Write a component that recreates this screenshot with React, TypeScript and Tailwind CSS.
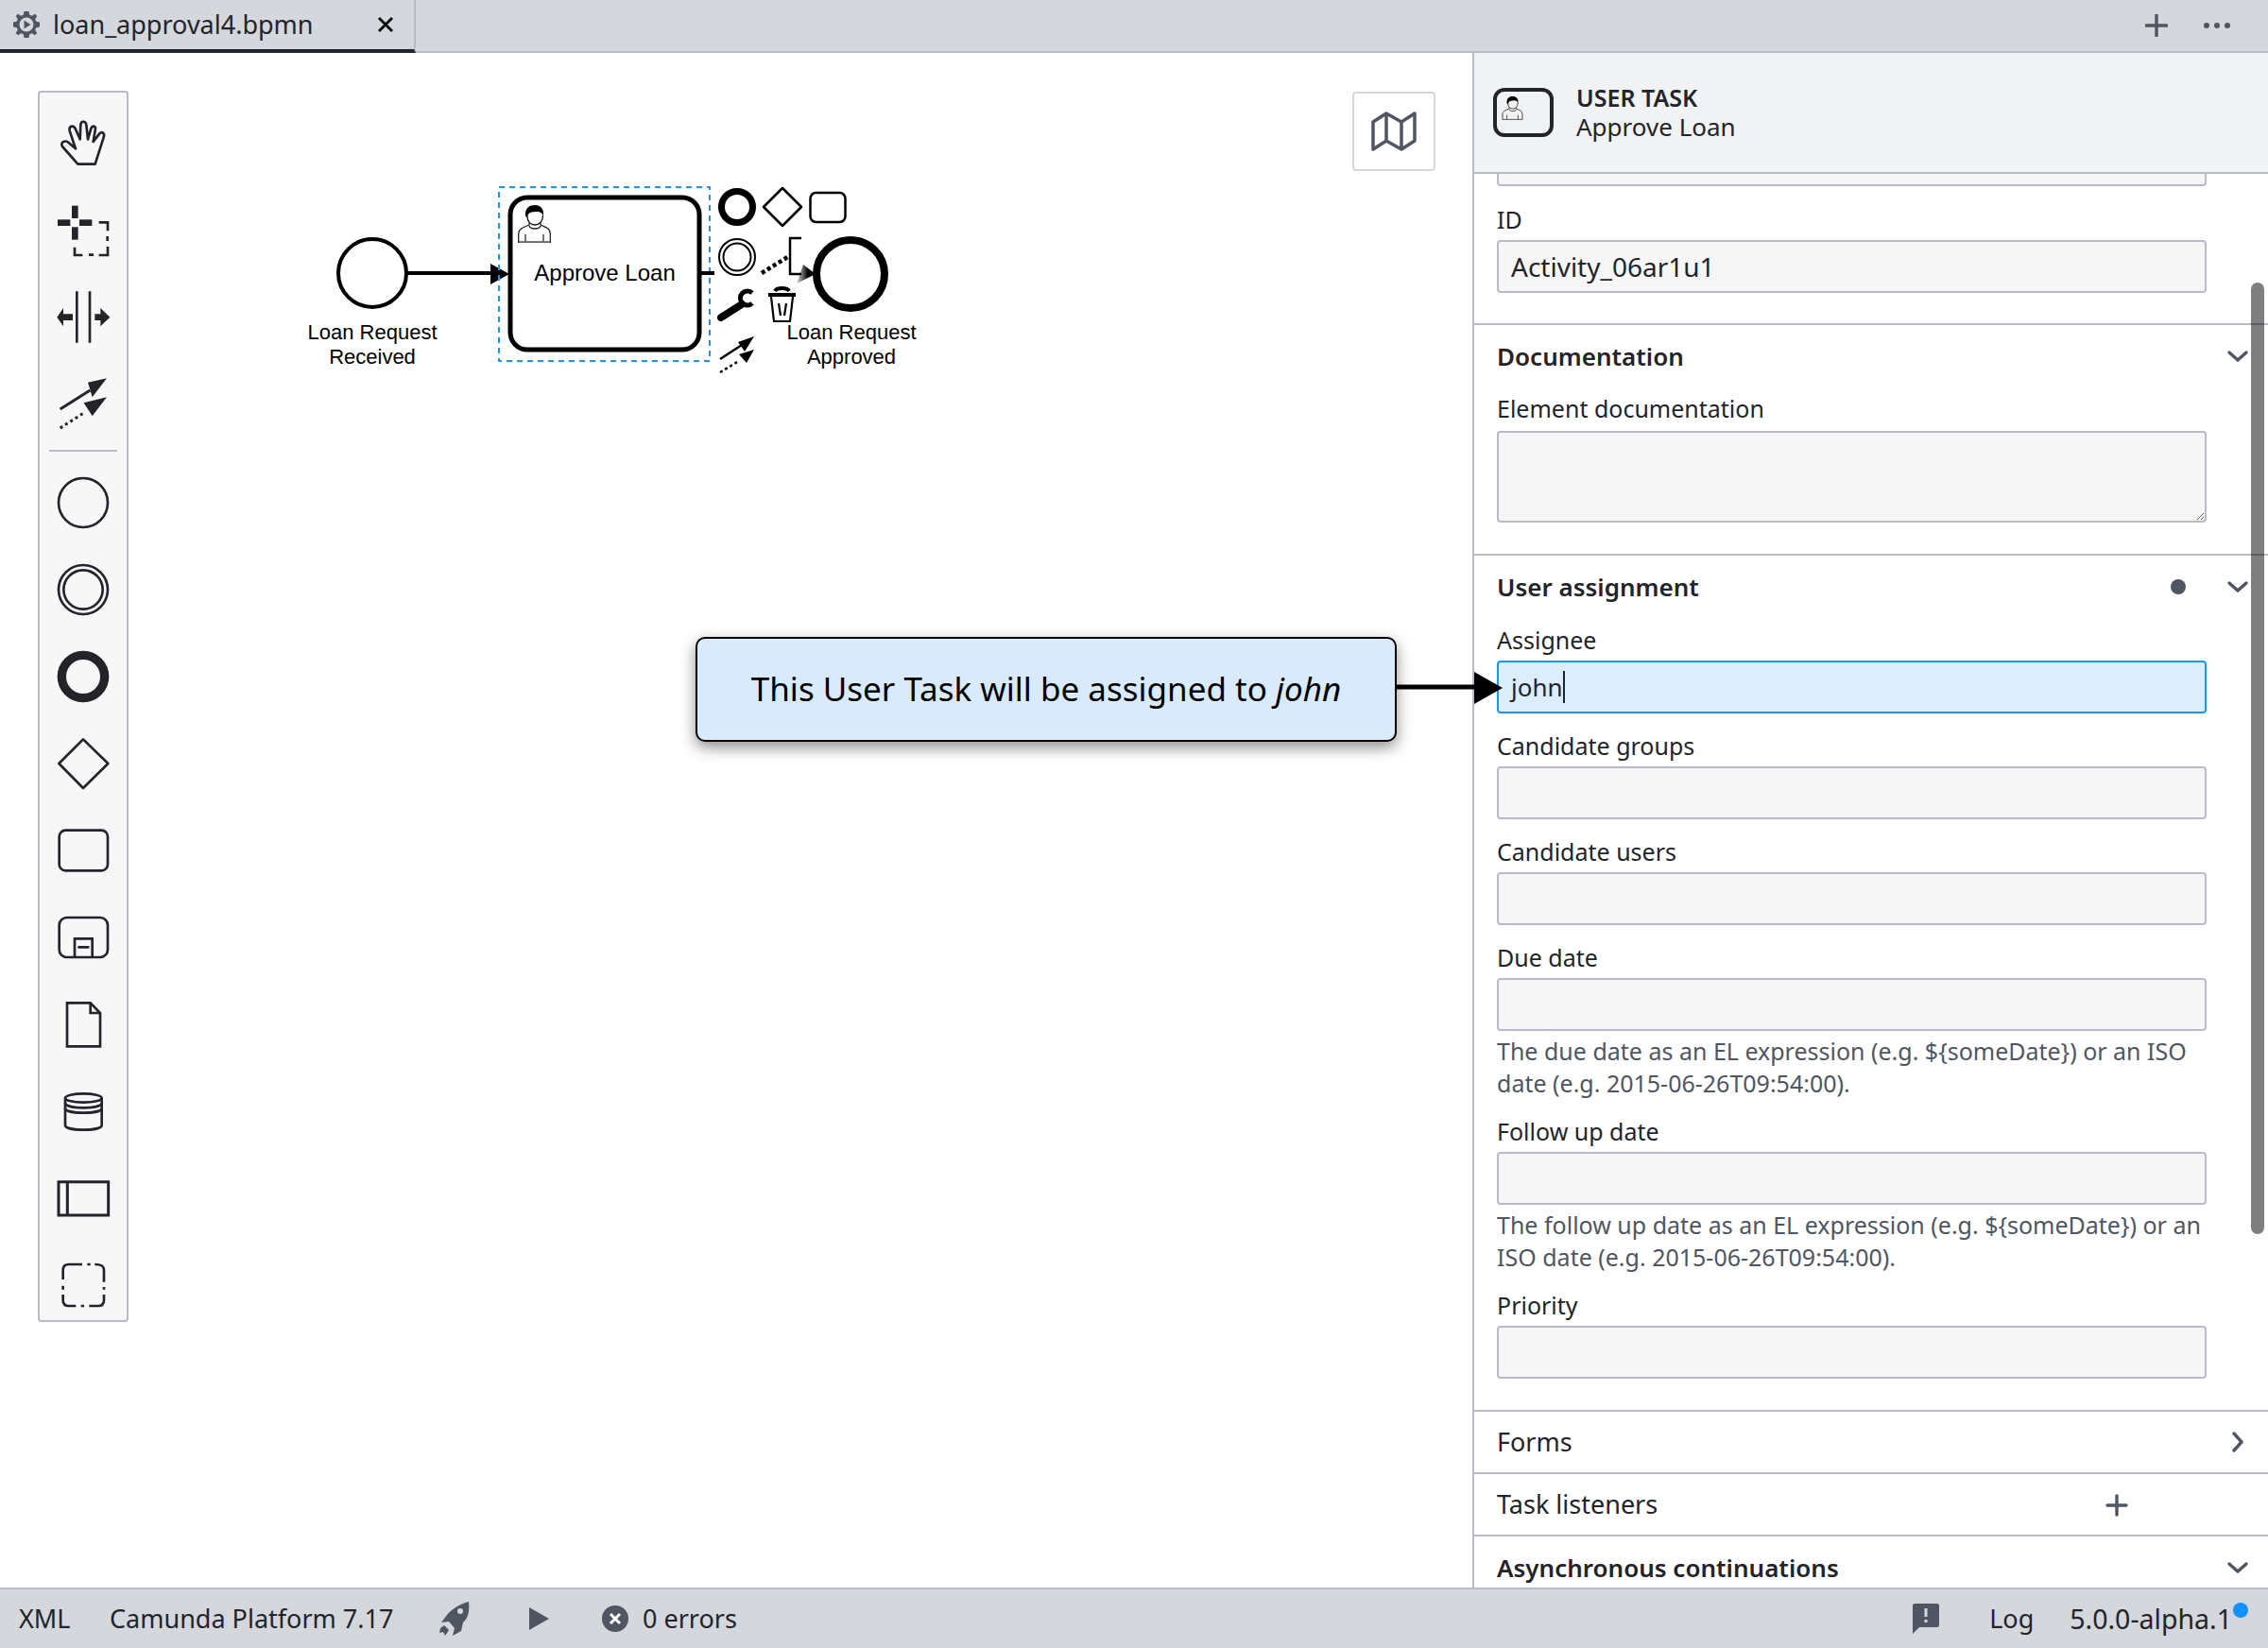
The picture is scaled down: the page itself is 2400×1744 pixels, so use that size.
import React from "react";

const FONT = "font-['Noto_Sans','Liberation_Sans',sans-serif]";
const C = "#22242a";
const G = "#505562";

function Ico({ vb, children }: { vb: string; children: React.ReactNode }) {
  return (
    <svg viewBox={vb} className="w-[60px] h-[60px] block" fill="none" stroke={C} strokeWidth="8">
      {children}
    </svg>
  );
}

function User({ className }: { className: string }) {
  return (
    <svg viewBox="0 0 35 40" className={className} fill="none">
      <path d="M8 11C7 3 13 0 18 0C24 0 28 4 27 12C26 8 23 6.500 19 7C15 7.500 11 7 10 13C9 13 8 12 8 11Z" fill="#000" />
      <path d="M10 12C10 17 13 21 18 21C23 21 26.500 17 26.500 11" stroke="#111" strokeWidth="1.300" />
      <path d="M12 19V21C8 23 1 24 .7 30V39.500H34.300V30C34 24 28 23 24 21V19" stroke="#222" strokeWidth="1.300" />
      <path d="M12 22C13 26 23 26 24 22" stroke="#222" strokeWidth="1.300" />
      <path d="M8 31V39M27 31V39" stroke="#666" strokeWidth="1.800" />
      <path d="M1 39.300H34" stroke="#666" strokeWidth="2" />
    </svg>
  );
}

function Toolbar() {
  return (
    <div className="absolute left-[40px] top-[40px] w-[96px] h-[1303px] bg-[#f7f7f8] border-2 border-[#b9bcc6] rounded-[4px] flex flex-col items-center pt-[24px]">
      <div className="flex flex-col gap-[32px]">
        <Ico vb="174 366 180 180">
          <path d="M247 521L198 465C190 452 207 444 217 452L240 472L221 415C218 400 233 396 239 408L254 442L256 396C258 382 272 384 274 396L279 442L289 408C294 396 306 400 302 414L296 450L316 424C324 416 334 424 329 436L302 521Z" strokeLinejoin="round" />
        </Ico>
        <Ico vb="174 639 180 180">
          <g fill={C} stroke="none">
            <rect x="228" y="650" width="20" height="40" />
            <rect x="228" y="718" width="20" height="40" />
            <rect x="183" y="694" width="40" height="20" />
            <rect x="252" y="694" width="40" height="20" />
          </g>
          <path d="M314 703H342V730M341 747V762M342 780V807H314M282 806H297M262 807H237V782" />
        </Ico>
        <Ico vb="113 678 180 180">
          <path d="M183 685V848M224 685V848" />
          <path d="M120 767L140 738V757H170V777H140V796ZM288 767L258 738V757H240V777H258V796Z" fill={C} stroke="none" />
        </Ico>
        <Ico vb="113 955 180 180">
          <path d="M130 1060L225 1000" strokeWidth="9" />
          <path d="M278 962L218 975L232 1022Z" fill={C} stroke="none" />
          <path d="M130 1120L205 1072" strokeWidth="9" strokeDasharray="9 10" />
          <path d="M278 1022L205 1040L232 1082Z" fill={C} stroke="none" />
        </Ico>
      </div>
      <div className="w-[72px] h-[2px] bg-[#b9bcc6] mt-[18px] mb-[24px]" />
      <div className="flex flex-col gap-[32px]">
        <Ico vb="113 65 180 180"><circle cx="203" cy="155" r="78" /></Ico>
        <Ico vb="113 340 180 180">
          <circle cx="203" cy="430" r="78" />
          <circle cx="203" cy="430" r="62" />
        </Ico>
        <Ico vb="113 616 180 180"><circle cx="203" cy="706" r="68" strokeWidth="28" /></Ico>
        <Ico vb="113 892 180 180"><path d="M203 905L282 982L203 1060L126 982Z" strokeLinejoin="round" /></Ico>
        <Ico vb="113 -92 180 180"><rect x="127" y="-66" width="154" height="128" rx="20" /></Ico>
        <Ico vb="113 185 180 180">
          <rect x="127" y="212" width="154" height="126" rx="24" />
          <path d="M176 336V279H232V336M186 306H222" />
        </Ico>
        <Ico vb="113 460 180 180">
          <path d="M152 482H226L257 514V620H152ZM226 482V514H257" />
        </Ico>
        <Ico vb="113 736 180 180">
          <path d="M146 784V870C146 890 262 890 262 870V784" />
          <ellipse cx="204" cy="784" rx="58" ry="14" />
          <path d="M146 800C146 820 262 820 262 800M146 816C146 836 262 836 262 816" />
        </Ico>
        <Ico vb="113 1014 180 180"><path d="M125 1052H283V1158H125ZM153 1052V1158" strokeWidth="9" /></Ico>
        <Ico vb="113 1288 180 180">
          <path d="M139 1360V1330C139 1318 146 1312 158 1312H200M216 1312H226M240 1312C262 1312 269 1318 269 1330V1368M269 1384V1392M269 1408V1425C269 1438 262 1444 250 1444H222M206 1444H196M180 1444H158C146 1444 139 1438 139 1425V1408M139 1392V1380" />
        </Ico>
      </div>
    </div>
  );
}

function Diagram() {
  return (
    <svg viewBox="0 56 1000 400" className="absolute left-0 top-0 w-[1000px] h-[400px]" fill="none" stroke="#000">
      <defs>
        <linearGradient id="fade" x1="0" x2="1" y1="0" y2="0">
          <stop offset="0" stopColor="#ddd" />
          <stop offset="0.6" stopColor="#000" />
        </linearGradient>
      </defs>
      <circle cx="394" cy="289" r="36" strokeWidth="4" />
      <path d="M431 289H522" strokeWidth="4" />
      <path d="M539 290L519 279V301Z" fill="#000" stroke="none" />
      <rect x="540" y="209" width="200" height="161" rx="18" strokeWidth="5" />
      <rect x="528" y="198" width="223" height="184" stroke="#1e96f0" strokeWidth="2" strokeDasharray="6 5" />
      <path d="M741 289H756" strokeWidth="4" />
      <circle cx="900" cy="290" r="36" strokeWidth="8" />
      <path d="M863 290L850 280L843 300Z" fill="url(#fade)" stroke="none" />
      <circle cx="780" cy="219" r="16.5" strokeWidth="7" />
      <path d="M828 199L848 219L828 239L808 219Z" strokeWidth="2.5" strokeLinejoin="round" />
      <rect x="857.5" y="204" width="37" height="31" rx="6" strokeWidth="2.5" />
      <circle cx="780" cy="272" r="19" strokeWidth="2" />
      <circle cx="780" cy="272" r="14.5" strokeWidth="2" />
      <path d="M806 289L835 271" strokeWidth="4.5" strokeDasharray="4 3" />
      <path d="M848 252H836V290H848" strokeWidth="2.5" />
      <path d="M763 336L785 322" strokeWidth="8" strokeLinecap="round" />
      <path d="M796 310A7.5 7.5 0 1 0 796 321" strokeWidth="5" />
      <path d="M813 312H842M820 308C822 304 833 304 835 308" strokeWidth="4" />
      <path d="M816 314L819 340H836L839 314M824 321L826 334M832 321L830 334" strokeWidth="2.2" />
      <path d="M762 380L785 365" strokeWidth="2.5" />
      <path d="M798 356L781 362L788 372Z" fill="#000" stroke="none" />
      <path d="M762 394L782 382" strokeWidth="2.5" strokeDasharray="3 3" />
      <path d="M798 370L782 375L790 384Z" fill="#000" stroke="none" />
    </svg>
  );
}

function Label({ x, y, lines }: { x: number; y: number; lines: string[] }) {
  return (
    <div
      className="absolute -translate-x-1/2 text-center font-['Liberation_Sans',sans-serif] text-[22px] leading-[26px] text-black whitespace-nowrap"
      style={{ left: x, top: y }}
    >
      {lines.map((l) => (
        <div key={l}>{l}</div>
      ))}
    </div>
  );
}

function Chevron({ right }: { right?: boolean }) {
  return (
    <svg viewBox="0 0 24 24" className="w-[24px] h-[24px] absolute right-[20px] top-1/2 -translate-y-1/2" fill="none" stroke={G} strokeWidth="3.4" strokeLinecap="round" strokeLinejoin="round">
      {right ? <path d="M8 3L16 12L8 21" /> : <path d="M3 8L12 16L21 8" />}
    </svg>
  );
}

function Field({ label, value, help }: { label: string; value?: string; help?: string[] }) {
  return (
    <div className="mt-[17px]">
      <div className="text-[25px] leading-[34px] mb-[5px] text-[#22242a]">{label}</div>
      <input
        readOnly
        value={value ?? ""}
        className="block w-[751px] h-[56px] px-[13px] bg-[#f6f6f6] border-2 border-[#b9bcc6] rounded-[4px] text-[28px] text-[#22242a] outline-none"
      />
      {help && (
        <div className="text-[25px] leading-[34px] mt-[4px] text-[#505562] whitespace-nowrap">
          {help.map((h) => (
            <div key={h}>{h}</div>
          ))}
        </div>
      )}
    </div>
  );
}

function Panel() {
  return (
    <aside className="w-[842px] h-full border-l-2 border-[#b9bcc6] flex flex-col overflow-hidden relative">
      <header className="h-[128px] shrink-0 bg-[#f1f2f4] border-b-2 border-[#b9bcc6] flex items-center pl-[20px] gap-[24px]">
        <div className="w-[64px] h-[52px] border-[4px] border-[#22242a] rounded-[12px] relative shrink-0">
          <User className="absolute left-[5px] top-[5px] w-[23px] h-[25px]" />
        </div>
        <div className="text-[#22242a]">
          <div className="text-[25px] leading-[30px] font-semibold">USER TASK</div>
          <div className="text-[26px] leading-[32px]">Approve Loan</div>
        </div>
      </header>
      <div className="h-[13px] shrink-0 pl-[24px]">
        <div className="w-[751px] h-[13px] bg-[#f6f6f6] border-x-2 border-b-2 border-[#b9bcc6] rounded-b-[4px]" />
      </div>
      <section className="pl-[24px] pt-[1px] h-[147px] border-b-2 border-[#b9bcc6] shrink-0">
        <Field label="ID" value="Activity_06ar1u1" />
      </section>
      <section className="pl-[24px] h-[244px] border-b-2 border-[#b9bcc6] shrink-0 relative">
        <div className="relative h-[66px] flex items-center -ml-[24px] pl-[24px] font-semibold text-[26px] text-[#22242a]">
          Documentation
          <Chevron />
        </div>
        <div className="text-[25px] leading-[34px] mb-[7px] mt-[5px] text-[#22242a]">Element documentation</div>
        <textarea readOnly className="block w-[751px] h-[97px] bg-[#f6f6f6] border-2 border-[#b9bcc6] rounded-[4px] outline-none" />
      </section>
      <section className="pl-[24px] h-[906px] border-b-2 border-[#b9bcc6] shrink-0">
        <div className="relative h-[66px] flex items-center -ml-[24px] pl-[24px] font-semibold text-[26px] text-[#22242a]">
          User assignment
          <div className="absolute left-[737px] top-[25px] w-[16px] h-[16px] rounded-full bg-[#505562]" />
          <Chevron />
        </div>
        <div className="mt-[6px]">
          <div className="text-[25px] leading-[34px] mb-[5px] text-[#22242a]">Assignee</div>
          <div className="w-[751px] h-[56px] px-[13px] bg-[#dcedfe] border-2 border-[#1c96f5] rounded-[4px] text-[26px] text-[#22242a] flex items-center">
            john<span className="w-[2px] h-[34px] bg-[#22242a]" />
          </div>
        </div>
        <Field label="Candidate groups" />
        <Field label="Candidate users" />
        <Field label="Due date" help={["The due date as an EL expression (e.g. ${someDate}) or an ISO", "date (e.g. 2015-06-26T09:54:00)."]} />
        <Field label="Follow up date" help={["The follow up date as an EL expression (e.g. ${someDate}) or an", "ISO date (e.g. 2015-06-26T09:54:00)."]} />
        <Field label="Priority" />
      </section>
      <section className="relative h-[66px] shrink-0 border-b-2 border-[#b9bcc6] flex items-center pl-[24px] text-[27px] text-[#22242a]">
        Forms
        <Chevron right />
      </section>
      <section className="relative h-[66px] shrink-0 border-b-2 border-[#b9bcc6] flex items-center pl-[24px] text-[27px] text-[#22242a]">
        Task listeners
        <svg viewBox="0 0 24 24" className="absolute left-[668px] top-[21px] w-[24px] h-[24px]" stroke={G} strokeWidth="3.4" strokeLinecap="round">
          <path d="M12 2V22M2 12H22" />
        </svg>
      </section>
      <section className="relative h-[66px] shrink-0 flex items-center pl-[24px] font-semibold text-[26px] text-[#22242a]">
        Asynchronous continuations
        <Chevron />
      </section>
      <div className="absolute right-[4px] top-[243px] w-[14px] h-[1007px] rounded-full bg-black/50" />
    </aside>
  );
}

function TabBar() {
  return (
    <div className="h-[56px] shrink-0 bg-[#d4d7dc] border-b-2 border-[#b9bcc6] flex relative">
      <div className="w-[440px] h-[56px] border-r-2 border-[#b9bcc6] border-b-[4px] border-b-[#22242a] flex items-center pl-[14px] pr-[20px] gap-[14px]">
        <svg viewBox="0 0 28 28" className="w-[28px] h-[28px] shrink-0" fill={G}>
          <path fillRule="evenodd" d="M11.5 0H16.5L17.2 3.7L19.8 4.8L23 2.7L25.3 5L23.2 8.2L24.3 10.8L28 11.5V16.5L24.3 17.2L23.2 19.8L25.3 23L23 25.3L19.8 23.2L17.2 24.3L16.5 28H11.5L10.8 24.3L8.2 23.2L5 25.3L2.7 23L4.8 19.8L3.7 17.2L0 16.5V11.5L3.7 10.8L4.8 8.2L2.7 5L5 2.7L8.2 4.8L10.8 3.7ZM14 6.5A7.5 7.5 0 1 0 14 21.5A7.5 7.5 0 1 0 14 6.5Z" />
          <path d="M11.5 9.5L18.5 14L11.5 18.5Z" />
        </svg>
        <span className="text-[27px] text-[#22242a] flex-1 whitespace-nowrap">loan_approval4.bpmn</span>
        <svg viewBox="0 0 16 16" className="w-[16px] h-[16px] mr-[2px]" stroke="#000" strokeWidth="2.8">
          <path d="M1 1L15 15M15 1L1 15" />
        </svg>
      </div>
      <svg viewBox="0 0 24 24" className="absolute left-[2270px] top-[15px] w-[24px] h-[24px]" stroke={G} strokeWidth="3.4" strokeLinecap="round">
        <path d="M12 1V23M1 12H23" />
      </svg>
      <div className="absolute left-[2332px] top-[24px] flex gap-[5px]">
        <div className="w-[6px] h-[6px] rounded-full bg-[#505562]" />
        <div className="w-[6px] h-[6px] rounded-full bg-[#505562]" />
        <div className="w-[6px] h-[6px] rounded-full bg-[#505562]" />
      </div>
    </div>
  );
}

function StatusBar() {
  return (
    <div className="h-[64px] shrink-0 bg-[#d4d7dc] border-t-2 border-[#b9bcc6] flex items-center text-[27px] text-[#22242a] relative">
      <span className="ml-[20px] w-[96px]">XML</span>
      <span className="w-[347px] whitespace-nowrap">Camunda Platform 7.17</span>
      <svg viewBox="0 0 34 36" className="w-[34px] h-[36px] mr-[62px] shrink-0" fill={G}>
        <path d="M33 0C34 9 33 17 27 22L25 31L16 36L18 28L12 21L4 22L10 14C15 8 24 2 33 0Z" />
        <circle cx="24" cy="10" r="3" fill="#d4d7dc" />
        <path d="M7 25L12 30L8 36L6 32L2 33L3 28Z" />
      </svg>
      <svg viewBox="0 0 22 26" className="w-[22px] h-[26px] mr-[56px] shrink-0" fill={G}>
        <path d="M1 1L22 13L1 25Z" />
      </svg>
      <svg viewBox="0 0 28 28" className="w-[28px] h-[28px] mr-[15px] shrink-0">
        <circle cx="14" cy="14" r="14" fill={G} />
        <path d="M9 9L19 19M19 9L9 19" stroke="#fff" strokeWidth="3" />
      </svg>
      <span className="whitespace-nowrap">0 errors</span>
      <div className="flex-1" />
      <svg viewBox="0 0 28 32" className="w-[28px] h-[32px] mr-[53px] shrink-0" fill={G}>
        <path d="M2 0H26C27 0 28 1 28 2V23C28 24 27 25 26 25H7L0 32V2C0 1 1 0 2 0Z" />
        <rect x="12.500" y="5" width="3" height="9" fill="#d4d7dc" />
        <rect x="12.500" y="17" width="3" height="3" fill="#d4d7dc" />
      </svg>
      <span className="w-[85px]">Log</span>
      <span className="mr-[38px] whitespace-nowrap relative text-[28.500px]">
        5.0.0-alpha.1
        <span className="absolute right-[-17px] top-[4px] w-[16px] h-[16px] rounded-full bg-[#1490ff]" />
      </span>
    </div>
  );
}

export default function App() {
  return (
    <div className={`relative w-[2400px] h-[1744px] overflow-hidden bg-white flex flex-col ${FONT}`}>
      <TabBar />
      <div className="flex-1 flex min-h-0">
        <main className="flex-1 relative">
          <Toolbar />
          <Diagram />
          <Label x={394} y={283} lines={["Loan Request", "Received"]} />
          <Label x={901} y={283} lines={["Loan Request", "Approved"]} />
          <div className="absolute left-[640px] top-[219px] -translate-x-1/2 font-['Liberation_Sans',sans-serif] text-[24px] leading-[28px] text-black whitespace-nowrap">
            Approve Loan
          </div>
          <div className="absolute left-[548px] top-[161px]">
            <User className="w-[35px] h-[40px]" />
          </div>
          <div className="absolute right-[39px] top-[41px] w-[88px] h-[84px] bg-white border-2 border-[#d4d7dc] rounded-[4px] flex items-center justify-center">
            <svg viewBox="0 0 48 42" className="w-[48px] h-[42px]" fill="none" stroke={G} strokeWidth="3.5" strokeLinejoin="round">
              <path d="M2 11L16 2L32 11L46 2V31L32 40L16 31L2 40ZM16 2V31M32 11V40" />
            </svg>
          </div>
        </main>
        <Panel />
      </div>
      <StatusBar />
      <div className="absolute left-[736px] top-[674px] w-[742px] h-[111px] bg-[#d9eafc] border-2 border-black rounded-[10px] shadow-[0_6px_16px_rgba(0,0,0,0.45)] flex items-center justify-center text-[35px] text-black whitespace-nowrap">
        <span>This User Task will be assigned to <em>john</em></span>
      </div>
      <svg viewBox="0 0 120 40" className="absolute left-[1476px] top-[708px] w-[120px] h-[40px]">
        <path d="M0 19H90" stroke="#000" strokeWidth="5" />
        <path d="M84 3L114 20L84 37Z" fill="#000" />
      </svg>
    </div>
  );
}
